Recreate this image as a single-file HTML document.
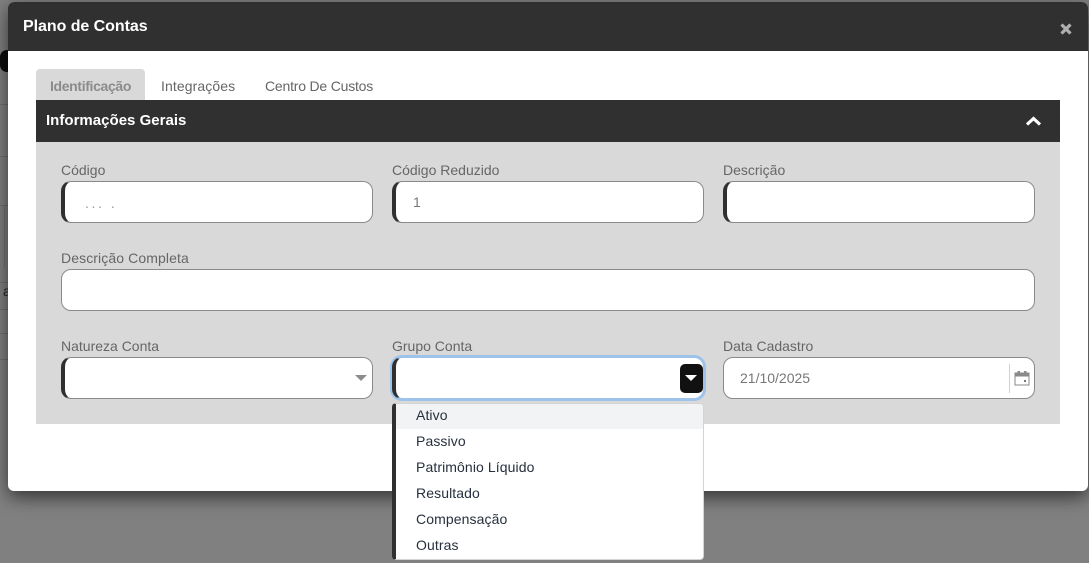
<!DOCTYPE html>
<html><head><meta charset="utf-8">
<style>
*{box-sizing:border-box}
html,body{margin:0;padding:0;width:1089px;height:563px;overflow:hidden;background:#808080;font-family:"Liberation Sans",sans-serif}
.a{position:absolute}
.line{position:absolute;left:0;width:8px;height:1px;background:#707070}
.lbl{position:absolute;font-size:14px;color:#666;line-height:16px;white-space:nowrap}
.inp{position:absolute;height:42px;background:#fff;border:1px solid #8a8a8a;border-radius:10px}
.req{border-left:4px solid #303030}
.it{position:absolute;left:20px;font-size:14px;color:#27303d;line-height:16px;white-space:nowrap;letter-spacing:.1px}
</style></head><body>
<div class="a" style="left:0;top:50px;width:14px;height:22px;border-radius:11px;background:#0d0d0d"></div>
<div class="line" style="top:104px"></div><div class="line" style="top:156px"></div>
<div class="line" style="top:205px"></div><div class="line" style="top:282px"></div>
<div class="line" style="top:309px"></div><div class="line" style="top:333px"></div><div class="line" style="top:359px"></div>
<div class="a" style="left:4px;top:205px;width:1px;height:63px;background:#707070"></div>
<div class="a" style="left:3px;top:283px;font-size:14px;line-height:16px;color:#222">a</div>

<div class="a" style="left:8px;top:2px;width:1080px;height:489px;background:#fff;border-radius:6px;box-shadow:0 6px 18px rgba(0,0,0,.6)"></div>
<div class="a" style="left:8px;top:2px;width:1080px;height:49px;background:#303030;border-radius:6px 6px 0 0"></div>
<div class="a" style="left:23px;top:18px;font-size:16px;font-weight:bold;line-height:18px;color:#fff;letter-spacing:-.05px;white-space:nowrap">Plano de Contas</div>
<svg class="a" style="left:1060px;top:23px" width="12" height="12" viewBox="0 0 12 12"><path d="M1.5 1.5L10.5 10.5M10.5 1.5L1.5 10.5" stroke="#b0b0b0" stroke-width="3.2"/></svg>

<div class="a" style="left:36px;top:69px;width:109px;height:31px;background:#d9d9d9;border-radius:4px 4px 0 0"></div>
<div class="a" style="left:50px;top:78px;font-size:14px;font-weight:bold;line-height:16px;color:#8b8b8b;white-space:nowrap;letter-spacing:-.35px">Identificação</div>
<div class="a" style="left:161px;top:78px;font-size:14px;line-height:16px;color:#666;white-space:nowrap;letter-spacing:.1px">Integrações</div>
<div class="a" style="left:265px;top:78px;font-size:14px;line-height:16px;color:#666;white-space:nowrap;letter-spacing:-.2px">Centro De Custos</div>

<div class="a" style="left:36px;top:100px;width:1024px;height:42px;background:#303030"></div>
<div class="a" style="left:46px;top:112px;font-size:15px;font-weight:bold;line-height:17px;color:#fff;white-space:nowrap;letter-spacing:.02px">Informações Gerais</div>
<svg class="a" style="left:1025px;top:115px" width="17" height="12" viewBox="0 0 17 12"><path d="M2 9.5L8.5 3.5L15 9.5" fill="none" stroke="#fff" stroke-width="3.2"/></svg>
<div class="a" style="left:36px;top:142px;width:1024px;height:282px;background:#d9d9d9"></div>

<div class="lbl" style="left:61px;top:162px">Código</div>
<div class="inp req" style="left:61px;top:181px;width:312px"></div>
<div class="a" style="left:85px;top:195px;font-size:14px;line-height:16px;color:#999;letter-spacing:-.65px;white-space:nowrap">. . . &nbsp;&nbsp;.</div>

<div class="lbl" style="left:392px;top:162px">Código Reduzido</div>
<div class="inp req" style="left:392px;top:181px;width:312px"></div>
<div class="a" style="left:413px;top:194px;font-size:14px;line-height:16px;color:#777">1</div>

<div class="lbl" style="left:723px;top:162px">Descrição</div>
<div class="inp req" style="left:723px;top:181px;width:312px"></div>

<div class="lbl" style="left:61px;top:250px;letter-spacing:.1px">Descrição Completa</div>
<div class="inp" style="left:61px;top:269px;width:974px"></div>

<div class="lbl" style="left:61px;top:338px">Natureza Conta</div>
<div class="inp req" style="left:61px;top:357px;width:312px"></div>
<svg class="a" style="left:355px;top:375px" width="12" height="6" viewBox="0 0 12 6"><path d="M0 0H12L6 6Z" fill="#8d8d8d"/></svg>

<div class="lbl" style="left:392px;top:338px">Grupo Conta</div>
<div class="a" style="left:392px;top:357px;width:312px;height:42px;background:#fff;border:1px solid #9dc3ea;border-left:4px solid #303030;border-radius:10px;box-shadow:0 0 0 2px #9dc3ea"></div>
<div class="a" style="left:680px;top:364px;width:23px;height:29px;background:#111;border-radius:5px"></div>
<svg class="a" style="left:685px;top:375px" width="12" height="6" viewBox="0 0 12 6"><path d="M0 0H12L6 6Z" fill="#fff"/></svg>

<div class="lbl" style="left:723px;top:338px">Data Cadastro</div>
<div class="inp" style="left:723px;top:357px;width:312px"></div>
<div class="a" style="left:740px;top:370px;font-size:14px;line-height:16px;color:#777;white-space:nowrap">21/10/2025</div>
<div class="a" style="left:1009px;top:364px;width:1px;height:29px;background:#d0d0d0"></div>
<svg class="a" style="left:1014px;top:370px" width="16" height="16" viewBox="0 0 16 16"><rect x="1" y="3" width="14" height="12" fill="#fff" stroke="#8a8a8a" stroke-width="1"/><rect x="1" y="3" width="14" height="3.5" fill="#8a8a8a"/><rect x="3.5" y="1" width="2.5" height="3" fill="#8a8a8a"/><rect x="10" y="1" width="2.5" height="3" fill="#8a8a8a"/><rect x="10" y="10" width="2" height="2" fill="#777"/></svg>

<div class="a" style="left:392px;top:403px;width:312px;height:157px;background:#fff;border:1px solid #d4d4d4;border-left:4px solid #303030;border-radius:4px;overflow:hidden">
<div class="a" style="left:0;top:0;width:100%;height:25px;background:#f2f3f5"></div>
<div class="it" style="top:3px">Ativo</div>
<div class="it" style="top:29px">Passivo</div>
<div class="it" style="top:55px">Patrimônio Líquido</div>
<div class="it" style="top:81px">Resultado</div>
<div class="it" style="top:107px">Compensação</div>
<div class="it" style="top:133px">Outras</div>
</div>
</body></html>
